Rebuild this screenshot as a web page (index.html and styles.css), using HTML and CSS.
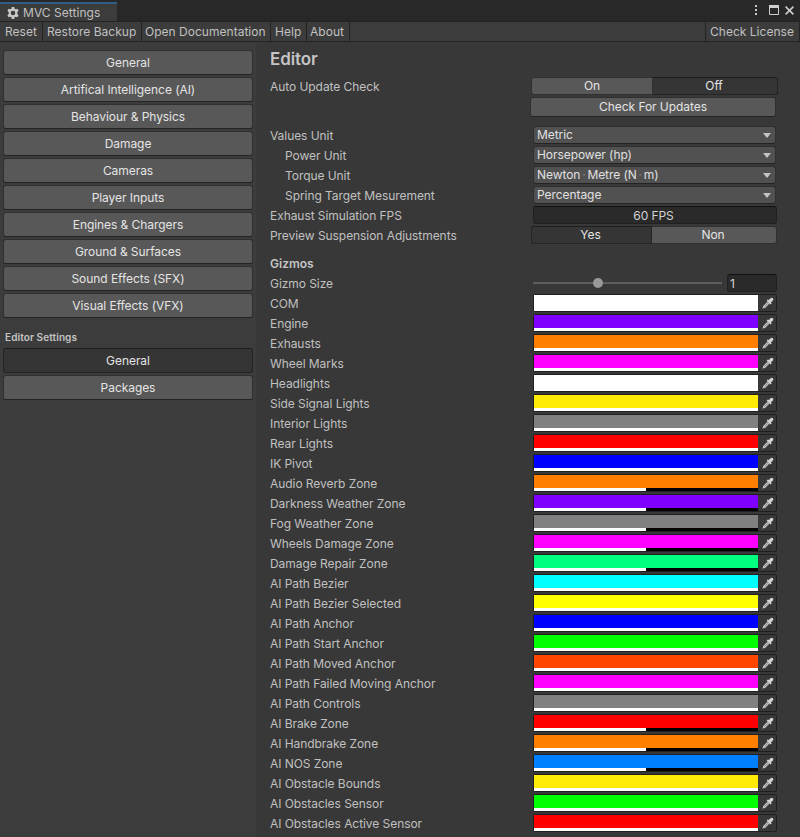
FILE: index.html
```html
<!DOCTYPE html>
<html lang="en">
<head>
<meta charset="utf-8">
<title>MVC Settings</title>
<link rel="stylesheet" href="styles.css">
</head>
<body>
<svg class="defs" aria-hidden="true">
  <symbol id="dropper" viewBox="0 0 12 12">
    <path d="M.5 11.6l.7-2.6L5.6 4.6l1.9 1.9-4.4 4.4z" fill="#c4c4c4"/>
    <path d="M2.4 9.7l3.4-3.4" stroke="#777" stroke-width=".8"/>
    <path d="M4.6 3.6l1.2-1.2 1 .7 1.7-1.9c1.5-1.6 3.9.5 2.4 2.2L9 5.2l.7 1.1-1.2 1.2z" fill="#d4d4d4"/>
  </symbol>
</svg>
<header class="titlebar">
  <div class="tab">
    <svg class="gear" viewBox="0 0 12 12"><path fill="#c8c8c8" fill-rule="evenodd" d="M4.8 0h2.4l.4 1.7 1 .6 1.8-.6 1.2 2.1-1.3 1.3v1.8l1.3 1.3-1.2 2.1-1.8-.6-1 .6-.4 1.7H4.8l-.4-1.7-1-.6-1.8.6L.4 8.2l1.3-1.3V5.1L.4 3.8l1.2-2.1 1.8.6 1-.6zM6 3.7a2.3 2.3 0 1 0 0 4.6 2.3 2.3 0 0 0 0-4.6z"/></svg>
    <span>MVC Settings</span>
  </div>
  <div class="window-icons">
    <svg width="4" height="12" viewBox="0 0 4 12" fill="#c8c8c8"><path d="M1 1h2v2H1zM1 5h2v2H1zM1 9h2v2H1z"/></svg>
    <svg width="10" height="10" viewBox="0 0 10 10"><path d="M.5.5h9v9h-9z" fill="none" stroke="#d0d0d0"/><path d="M0 0h10v3H0z" fill="#d0d0d0"/></svg>
    <svg width="9" height="9" viewBox="0 0 9 9"><path d="M.6.6l7.8 7.8M8.4.6L.6 8.4" stroke="#d0d0d0" stroke-width="1.5"/></svg>
  </div>
</header>
<nav class="toolbar">
  <span class="tool reset">Reset</span><span class="tool restore">Restore Backup</span><span class="tool docs">Open Documentation</span><span class="tool help">Help</span><span class="tool about">About</span><span class="tool license">Check License</span>
</nav>
<div class="content">
  <aside class="sidebar">
    <button>General</button>
    <button>Artifical Intelligence (AI)</button>
    <button>Behaviour &amp; Physics</button>
    <button>Damage</button>
    <button>Cameras</button>
    <button>Player Inputs</button>
    <button>Engines &amp; Chargers</button>
    <button>Ground &amp; Surfaces</button>
    <button>Sound Effects (SFX)</button>
    <button>Visual Effects (VFX)</button>
    <h2>Editor Settings</h2>
    <button class="active">General</button>
    <button>Packages</button>
  </aside>
  <main class="panel">
    <h1>Editor</h1>
    <div class="row"><label>Auto Update Check</label><div class="toggle update-toggle"><span>On</span><span class="on">Off</span></div></div>
    <div class="row update-row"><button class="update">Check For Updates</button></div>
    <div class="row"><label>Values Unit</label><div class="select">Metric</div></div>
    <div class="row"><label class="indent">Power Unit</label><div class="select">Horsepower (hp)</div></div>
    <div class="row"><label class="indent">Torque Unit</label><div class="select">Newton<i>·</i>Metre (N<i>·</i>m)</div></div>
    <div class="row"><label class="indent">Spring Target Mesurement</label><div class="select">Percentage</div></div>
    <div class="row"><label>Exhaust Simulation FPS</label><div class="field fps">60 FPS</div></div>
    <div class="row"><label>Preview Suspension Adjustments</label><div class="toggle preview-toggle"><span class="on">Yes</span><span>Non</span></div></div>
    <h3>Gizmos</h3>
    <div class="row"><label>Gizmo Size</label><div class="slider"><div class="track"><div class="thumb"></div></div><div class="field size">1</div></div></div>
    <div id="gizmo-colors"></div>
  </main>
</div>
<script src="script.js"></script>
</body>
</html>
```
FILE: styles.css
```css
* { box-sizing: border-box; }
body {
  margin: 0;
  width: 800px;
  height: 837px;
  overflow: hidden;
  display: flex;
  flex-direction: column;
  background: #383838;
  color: #c0c0c0;
  font: 12px/18px Inter, "Liberation Sans", sans-serif;
  letter-spacing: -.06px;
  white-space: nowrap;
}
.defs { display: none; }
.titlebar {
  flex: none;
  height: 21px;
  background: #282828;
  display: flex;
  justify-content: space-between;
}
.tab {
  width: 117px;
  margin-top: 2px;
  border-top: 2px solid #2c5d87;
  background: #3c3c3c;
  display: flex;
  align-items: center;
  padding-left: 7px;
  gap: 4px;
  letter-spacing: .05px;
}
.gear { width: 12px; height: 12px; }
.window-icons { display: flex; align-items: center; gap: 11px; padding: 0 6px 1px 0; }
.window-icons svg:last-child { margin-left: -5px; }
.toolbar {
  flex: none;
  height: 21px;
  background: #3c3c3c;
  border-top: 1px solid #232323;
  border-bottom: 1px solid #232323;
  display: flex;
  letter-spacing: .02px;
}
.tool { border-right: 1px solid #232323; padding: 1px 0 0 4px; }
.reset { width: 43px; padding-left: 5px; }
.restore { width: 99px; padding-left: 4px; }
.docs { width: 129px; padding-left: 3px; }
.help { width: 36px; }
.about { width: 43px; padding-left: 3px; }
.license { width: 95px; margin-left: auto; border-left: 1px solid #232323; }
.content { flex: 1; display: flex; min-height: 0; }
.sidebar {
  width: 256px;
  background: #3c3c3c;
  padding: 8px 3px 0;
  display: flex;
  flex-direction: column;
  gap: 2px;
}
button {
  font: inherit;
  letter-spacing: inherit;
  color: #e4e4e4;
  background: #585858;
  border: 1px solid #303030;
  border-bottom-color: #242424;
  border-radius: 3px;
  padding: 0;
}
.sidebar button { width: 250px; height: 25px; flex: none; }
.sidebar button.active, .toggle .on { background: #353535; border-color: #1e1e1e #252525 #252525; }
h1, h2, h3 { margin: 0; font-weight: 600; color: #c4c4c4; }
h2 { font-size: 10px; line-height: 16px; height: 26px; padding: 9px 2px 0; letter-spacing: .1px; }
.panel { width: 544px; padding: 8px 0 0 14px; }
h1 { font-size: 17px; line-height: 19px; height: 27px; letter-spacing: -.1px; }
h3 { font-size: 12px; height: 18px; margin: 10px 0 2px; padding-top: 1px; letter-spacing: 0; }
.row { display: flex; height: 18px; margin-bottom: 2px; }
label { width: 263px; padding-top: 1px; }
.indent { padding-left: 15px; }
.update-row { margin: 0 0 9px; height: 20px; }
.update { width: 246px; height: 20px; margin-left: 260px; }
.toggle { display: flex; width: 247px; margin-left: -2px; color: #e4e4e4; text-align: center; line-height: 16px; }
.toggle span { background: #585858; border: 1px solid #303030; }
.toggle span:first-child { width: 122px; border-radius: 3px 0 0 3px; }
.toggle span:last-child { width: 125px; border-left: 0; border-radius: 0 3px 3px 0; padding-right: 2px; }
.preview-toggle span:first-child { width: 121px; padding-right: 2px; }
.select {
  width: 243px;
  height: 18px;
  background: #515151;
  border: 1px solid #303030;
  border-bottom-color: #242424;
  border-radius: 3px;
  color: #e0e0e0;
  padding: 0 4px 0 3px;
  line-height: 16px;
  display: flex;
  align-items: center;
}
.select::after {
  content: "";
  margin-left: auto;
  border: 4px solid transparent;
  border-top: 5px solid #c4c4c4;
  border-bottom: 0;
}
.select i { font-style: normal; color: #888; width: 7px; text-align: center; }
.field { background: #2a2a2a; border: 1px solid #212121; border-top-color: #111; border-radius: 3px; color: #d2d2d2; line-height: 17px; }
.fps { width: 244px; text-align: center; padding-right: 3px; }
.slider { display: flex; justify-content: space-between; align-items: center; width: 244px; }
.track { width: 189px; height: 2px; background: #5e5e5e; display: flex; align-items: center; }
.thumb { width: 10px; height: 10px; border-radius: 50%; background: #999; margin-left: 60px; flex: none; }
.size { width: 50px; height: 18px; padding-left: 2px; }
.color { display: flex; width: 244px; height: 18px; border: 1px solid #202020; border-radius: 2px; }
.swatch { width: 224px; display: flex; flex-direction: column; }
.alpha { height: 3px; margin-top: auto; background: #000; }
.alpha div { height: 3px; background: #fff; }
.pick { flex: 1; display: flex; align-items: center; justify-content: center; padding-left: 2px; }
.pick svg { width: 12px; height: 12px; }
```
FILE: script.js
```js
// [label, colour, alpha in percent]
const colors = [
  ["COM", "#ffffff", 100],
  ["Engine", "#8000ff", 100],
  ["Exhausts", "#ff8000", 100],
  ["Wheel Marks", "#ff00ff", 100],
  ["Headlights", "#ffffff", 100],
  ["Side Signal Lights", "#ffeb04", 100],
  ["Interior Lights", "#808080", 100],
  ["Rear Lights", "#ff0000", 100],
  ["IK Pivot", "#0000ff", 100],
  ["Audio Reverb Zone", "#ff8000", 50],
  ["Darkness Weather Zone", "#8000ff", 50],
  ["Fog Weather Zone", "#808080", 50],
  ["Wheels Damage Zone", "#ff00ff", 50],
  ["Damage Repair Zone", "#00ff80", 50],
  ["AI Path Bezier", "#00ffff", 100],
  ["AI Path Bezier Selected", "#ffff00", 100],
  ["AI Path Anchor", "#0000ff", 100],
  ["AI Path Start Anchor", "#00ff00", 100],
  ["AI Path Moved Anchor", "#ff4500", 100],
  ["AI Path Failed Moving Anchor", "#ff00ff", 100],
  ["AI Path Controls", "#808080", 100],
  ["AI Brake Zone", "#ff0000", 50],
  ["AI Handbrake Zone", "#ff8000", 50],
  ["AI NOS Zone", "#0080ff", 50],
  ["AI Obstacle Bounds", "#ffeb04", 100],
  ["AI Obstacles Sensor", "#00ff00", 100],
  ["AI Obstacles Active Sensor", "#ff0000", 100]
];
document.getElementById("gizmo-colors").innerHTML = colors.map(([name, color, alpha]) =>
  `<div class="row"><label>${name}</label><div class="color">
    <div class="swatch" style="background:${color}"><div class="alpha"><div style="width:${alpha}%"></div></div></div>
    <div class="pick"><svg><use href="#dropper"/></svg></div>
  </div></div>`).join("");
```
